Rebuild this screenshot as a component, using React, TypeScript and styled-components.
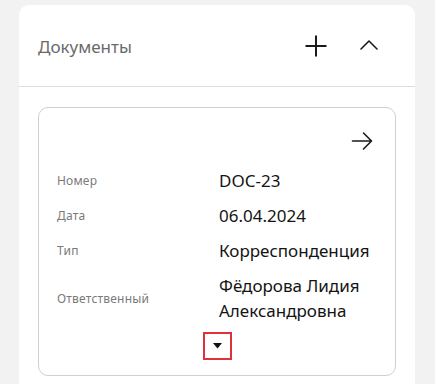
import React from "react";
import styled, { createGlobalStyle } from "styled-components";

const Global = createGlobalStyle`
  html, body { margin: 0; padding: 0; background: #f2f2f2; }
  body { font-family: "Noto Sans", "Open Sans", sans-serif; }
  * { box-sizing: border-box; }
`;

const Page = styled.div`
  padding: 5px 20px 0 19px;
  height: 384px;
  overflow: hidden;
`;

const Panel = styled.section`
  background: #ffffff;
  border-radius: 10px;
  min-height: 420px;
`;

const Header = styled.header`
  height: 82px;
  display: flex;
  align-items: center;
  padding: 0 35px 0 19px;
  border-bottom: 1px solid #dcdcdc;
`;

const Title = styled.h2`
  margin: 0;
  flex: 1;
  font-size: 17px;
  font-weight: 400;
  color: #6a6a6a;
  padding-top: 1px;
`;

const IconButton = styled.button<{ $ml?: number }>`
  background: none;
  border: none;
  padding: 0;
  margin-left: ${(p) => p.$ml ?? 0}px;
  display: flex;
  align-items: center;
  justify-content: center;
  color: #1a1a1a;
  cursor: pointer;
`;

const Body = styled.div`
  padding: 20px 19px;
`;

const Card = styled.article`
  border: 1px solid #cfcfcf;
  border-radius: 10px;
  padding: 22px 18px 15px 18px;
  display: flex;
  flex-direction: column;
`;

const ArrowRow = styled.div`
  display: flex;
  justify-content: flex-end;
  padding-right: 4px;
  margin-bottom: 16px;
`;

const Rows = styled.dl`
  margin: 0;
  display: grid;
  grid-template-columns: 162px 1fr;
  row-gap: 10px;
  align-items: center;
`;

const Label = styled.dt`
  font-size: 12px;
  color: #7a7a7a;
  letter-spacing: 0.2px;
  line-height: 25px;
`;

const Value = styled.dd`
  margin: 0;
  font-size: 17px;
  color: #141414;
  line-height: 25px;
`;

const ToggleWrap = styled.div`
  display: flex;
  justify-content: center;
  margin-top: 9px;
`;

const Toggle = styled.button`
  width: 29px;
  height: 28px;
  border: 2px solid #e0303c;
  background: #fff;
  padding: 0;
  display: flex;
  align-items: center;
  justify-content: center;
  cursor: pointer;
`;

const rows: [string, string][] = [
  ["Номер", "DOC-23"],
  ["Дата", "06.04.2024"],
  ["Тип", "Корреспонденция"],
  ["Ответственный", "Фёдорова Лидия Александровна"],
];

export default function App() {
  return (
    <>
      <Global />
      <Page>
        <Panel>
          <Header>
            <Title>Документы</Title>
            <IconButton aria-label="Добавить">
              <svg width="24" height="24" viewBox="0 0 24 24" fill="none" stroke="#1a1a1a" strokeWidth="2">
                <path d="M12 1.5v21M1.5 12h21" />
              </svg>
            </IconButton>
            <IconButton $ml={30} aria-label="Свернуть">
              <svg width="22" height="22" viewBox="0 0 22 22" fill="none" stroke="#1a1a1a" strokeWidth="1.6" strokeLinecap="round" strokeLinejoin="round">
                <path d="M3 14 L11 6 L19 14" />
              </svg>
            </IconButton>
          </Header>
          <Body>
            <Card>
              <ArrowRow>
                <svg width="22" height="22" viewBox="0 0 22 22" fill="none" stroke="#1a1a1a" strokeWidth="1.6" strokeLinecap="round" strokeLinejoin="round">
                  <path d="M1.5 11h19M12.5 3l8 8-8 8" />
                </svg>
              </ArrowRow>
              <Rows>
                {rows.map(([l, v]) => (
                  <React.Fragment key={l}>
                    <Label>{l}</Label>
                    <Value>{v}</Value>
                  </React.Fragment>
                ))}
              </Rows>
              <ToggleWrap>
                <Toggle aria-label="Развернуть">
                  <svg width="9" height="6" viewBox="0 0 9 6">
                    <path d="M0 0h9L4.5 5.5z" fill="#111" />
                  </svg>
                </Toggle>
              </ToggleWrap>
            </Card>
          </Body>
        </Panel>
      </Page>
    </>
  );
}
